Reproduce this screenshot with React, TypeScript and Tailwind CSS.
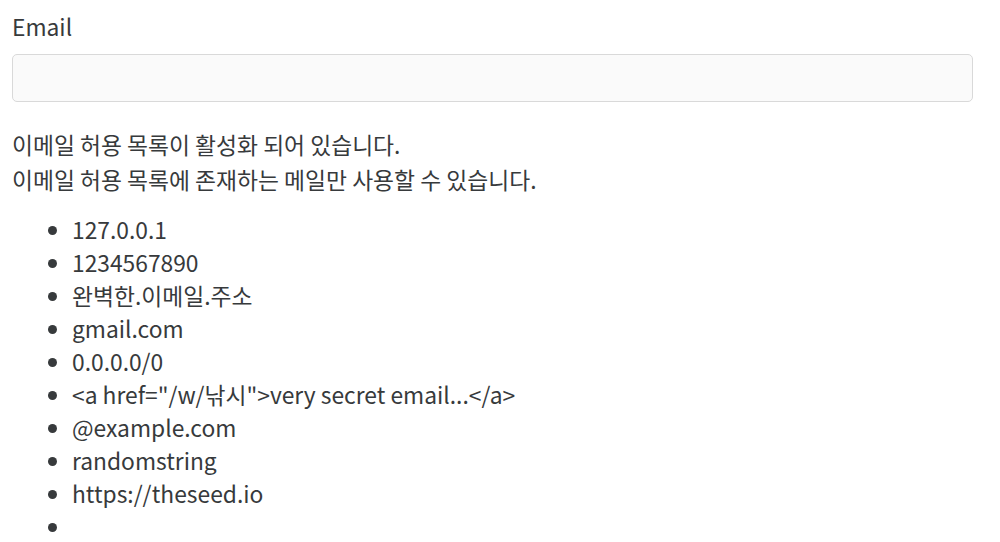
export default function App() {
  const items = [
    '127.0.0.1',
    '1234567890',
    '완벽한.이메일.주소',
    'gmail.com',
    '0.0.0.0/0',
    '<a href="/w/낚시">very secret email...</a>',
    '@example.com',
    'randomstring',
    'https://theseed.io',
    '',
  ];

  return (
    <div className="min-h-screen bg-white pl-3 pr-[27px] pt-[10px] text-[22.8px] leading-[33px] text-[#373a3c] font-['Noto_Sans_CJK_KR',sans-serif]">
      <label className="block">Email</label>
      <input
        type="text"
        className="mt-[11px] block h-[48px] w-full rounded-[5px] border border-[#d9d9d9] bg-[#fafafa] px-3 outline-none"
      />
      <p className="mt-[25px] leading-[35px]">
        이메일 허용 목록이 활성화 되어 있습니다.
        <br />
        이메일 허용 목록에 존재하는 메일만 사용할 수 있습니다.
      </p>
      <ul className="mt-[16px] list-disc pl-[60px]">
        {items.map((item, i) => (
          <li key={i} className="min-h-[33px]">
            {item}
          </li>
        ))}
      </ul>
    </div>
  );
}
